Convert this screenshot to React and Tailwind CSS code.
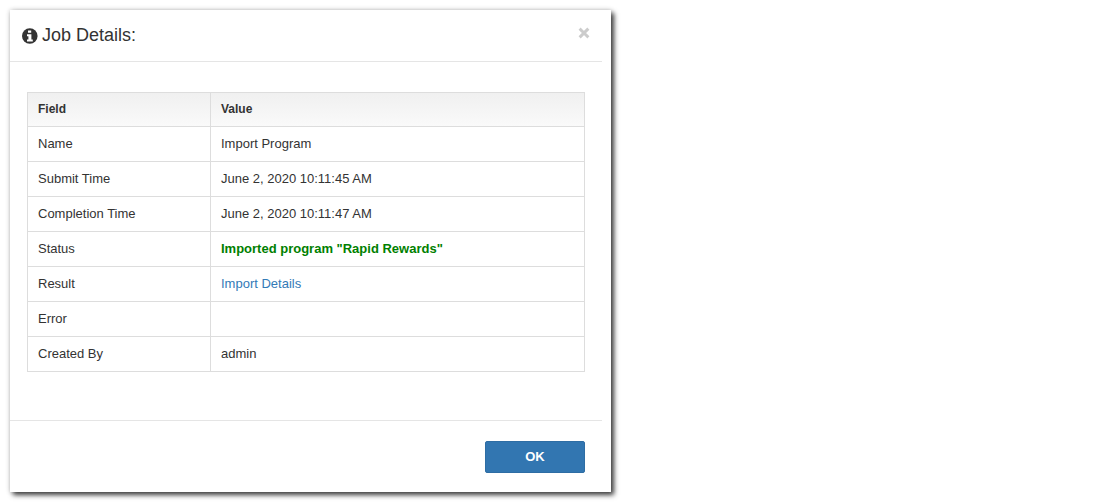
import { useState } from "react";

const job = [
  { field: "Name", value: "Import Program" },
  { field: "Submit Time", value: "June 2, 2020 10:11:45 AM" },
  { field: "Completion Time", value: "June 2, 2020 10:11:47 AM" },
  { field: "Status", value: 'Imported program "Rapid Rewards"', type: "status" },
  { field: "Result", value: "Import Details", type: "link" },
  { field: "Error", value: "" },
  { field: "Created By", value: "admin" },
];

function InfoIcon() {
  return (
    <svg viewBox="0 0 16 16" className="w-4 h-4" aria-hidden="true">
      <circle cx="7.8" cy="8" r="7.8" fill="#333" />
      <path d="M6 2.4h3.2v2.4H6z M5 6.2h4.4v5.2h1.4v2H5v-2h1.4V8.2H5z" fill="#fff" />
    </svg>
  );
}

function CloseIcon() {
  return (
    <svg viewBox="0 0 12 12" className="w-3 h-3" aria-hidden="true">
      <path d="M2.7 2.7l6.6 6.6M9.3 2.7l-6.6 6.6" fill="none" stroke="currentColor" strokeWidth="3" strokeLinecap="square" />
    </svg>
  );
}

function Value({ row }) {
  if (row.type === "status") return <span className="font-bold text-[#008000]">{row.value}</span>;
  if (row.type === "link") return <a href="#details" className="text-[#337ab7] hover:underline">{row.value}</a>;
  return row.value;
}

export default function App() {
  const [open, setOpen] = useState(true);

  if (!open) return null;

  return (
    <div className="p-2.5 font-['Liberation_Sans',Arial,sans-serif] text-[13px] leading-5 text-[#333]">
      <div
        role="dialog"
        aria-labelledby="job-title"
        className="max-w-[601px] bg-white pr-[9px] shadow-[0_0_5px_rgba(0,0,0,0.2),3px_3px_5px_rgba(0,0,0,0.75)]"
      >
        <div className="flex items-center justify-between border-b border-[#e5e5e5] px-3 py-3">
          <h4 id="job-title" className="flex items-center gap-1 text-lg leading-[27px]">
            <InfoIcon />
            Job Details:
          </h4>
          <button onClick={() => setOpen(false)} aria-label="Close" className="mb-1.5 text-[#ccc] hover:text-[#888] cursor-pointer">
            <CloseIcon />
          </button>
        </div>

        <div className="pl-[17px] pr-[17px] pt-[30px] pb-12">
          <table className="w-full table-fixed border-collapse border border-[#ddd]">
            <thead className="bg-linear-to-b from-[#f0f0f0] to-[#fafafa] text-xs leading-[17px]">
              <tr>
                <th className="w-[183px] border border-[#ddd] px-2.5 py-2 text-left font-bold">Field</th>
                <th className="border border-[#ddd] px-2.5 py-2 text-left font-bold">Value</th>
              </tr>
            </thead>
            <tbody>
              {job.map((row) => (
                <tr key={row.field} className="h-[35px]">
                  <td className="border border-[#ddd] px-2.5 py-[7px]">{row.field}</td>
                  <td className="border border-[#ddd] px-2.5 py-[7px]"><Value row={row} /></td>
                </tr>
              ))}
            </tbody>
          </table>
        </div>

        <div className="flex justify-end border-t border-[#e5e5e5] pr-[17px] pt-5 pb-[19px]">
          <button
            onClick={() => setOpen(false)}
            className="h-8 w-[100px] rounded-xs border border-[#2e6da4] bg-[#3276b1] font-bold text-white cursor-pointer hover:bg-[#286090]"
          >
            OK
          </button>
        </div>
      </div>
    </div>
  );
}
